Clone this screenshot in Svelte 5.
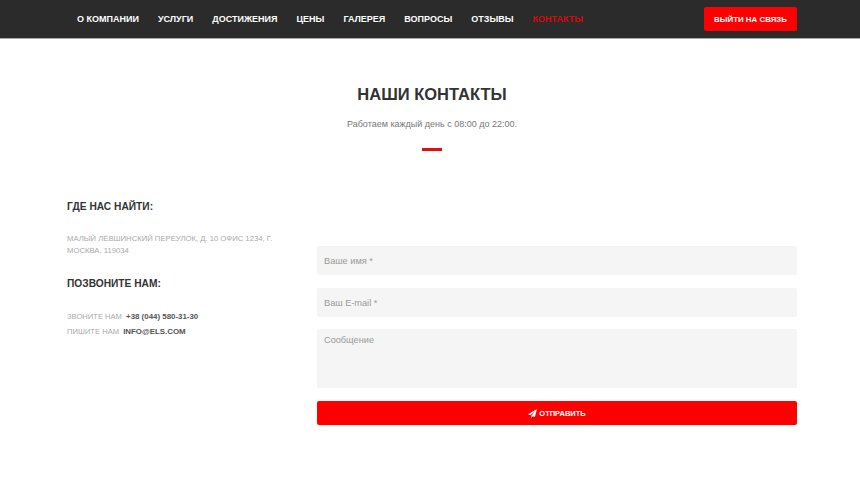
<script>
  const links = ['О компании','Услуги','Достижения','Цены','Галерея','Вопросы','Отзывы','Контакты'];
</script>

<header class="bar">
  <nav class="nav">
    {#each links as l, i}
      <a href="#x" class:active={i === links.length - 1}>{l}</a>
    {/each}
  </nav>
  <button class="cta" type="button">Выйти на связь</button>
</header>

<main class="main">
  <section class="head">
    <h1>Наши контакты</h1>
    <p>Работаем каждый день с 08:00 до 22:00.</p>
    <div class="rule"></div>
  </section>
  <section class="cols">
    <div class="info">
      <h2>Где нас найти:</h2>
      <p class="addr">Малый Лёвшинский переулок, д. 10 офис 1234, г. Москва, 119034</p>
      <h2 class="second">Позвоните нам:</h2>
      <p class="line">Звоните нам <b>+38 (044) 580-31-30</b></p>
      <p class="line">Пишите нам <b>info@els.com</b></p>
    </div>
    <form class="form">
      <input placeholder="Ваше имя *" />
      <input placeholder="Ваш E-mail *" />
      <textarea placeholder="Сообщение"></textarea>
      <button class="send" type="button">
        <svg viewBox="0 0 16 16" width="9" height="9"><path fill="#fff" d="M16 0 0 9.2l4.3 1.8L13 3.5 6 12v4l2.6-3.2 3.6 1.5z"/></svg>
        Отправить
      </button>
    </form>
  </section>
</main>

<style>
  :global(body) { margin: 0; background: #fff; font-family: "Liberation Sans", Arial, sans-serif; }
  .bar {
    height: 38px; background: #2b2b2b; border-bottom: 1px solid #aaa;
    display: flex; align-items: center; justify-content: space-between;
    padding: 0 63px 0 77px;
  }
  .nav { display: flex; gap: 19px; }
  .nav a {
    color: #fff; text-decoration: none; font-size: 9px; font-weight: 700;
    text-transform: uppercase;
  }
  .nav a.active { color: #d40a0a; }
  .cta {
    width: 93px; height: 24px; border: 0; border-radius: 2px; background: #f00; color: #fff;
    font: 700 7.9px "Liberation Sans", Arial, sans-serif; text-transform: uppercase; padding: 0;
  }
  .main { padding: 0 63px 0 67px; }
  .head { text-align: center; padding-top: 45px; }
  h1 {
    margin: 0; font-size: 16.5px; line-height: 20px; font-weight: 700; color: #333;
    text-transform: uppercase;
  }
  .head p { margin: 14px 0 0; font-size: 9px; line-height: 12px; color: #777; }
  .rule { width: 20px; height: 3px; background: #d11; margin: 18px auto 0; }
  .cols { display: flex; gap: 40px; margin-top: 49px; }
  .info { width: 210px; flex: none; }
  h2 { margin: 0; font-size: 10.2px; line-height: 14px; font-weight: 700; color: #333; text-transform: uppercase; }
  h2.second { margin-top: 21px; }
  .addr { margin: 19px 0 0; font-size: 7.7px; line-height: 11.5px; color: #aaa; text-transform: uppercase; }
  .line { margin: 0; font-size: 7.6px; line-height: 15px; color: #aaa; text-transform: uppercase; }
  h2.second + .line { margin-top: 18px; }
  .line b { color: #555; margin-left: 2px; font-size: 7.9px; }
  .form { flex: 1; display: flex; flex-direction: column; padding-top: 46px; }
  input, textarea {
    display: block; box-sizing: border-box; width: 100%; border: 0; border-radius: 2px; background: #f5f5f5;
    font: 9.2px "Liberation Sans", Arial, sans-serif; padding: 0 7px; outline: 0; resize: none;
  }
  input { height: 29px; margin-bottom: 13px; }
  input + input { margin-bottom: 12px; }
  textarea { height: 59px; margin-bottom: 13px; padding-top: 6px; }
  ::placeholder { color: #999; opacity: 1; }
  .send {
    height: 24px; border: 0; border-radius: 2px; background: #f00; color: #fff; padding: 0;
    font: 700 7.5px "Liberation Sans", Arial, sans-serif; text-transform: uppercase;
    display: flex; align-items: center; justify-content: center; gap: 2px;
  }
</style>
